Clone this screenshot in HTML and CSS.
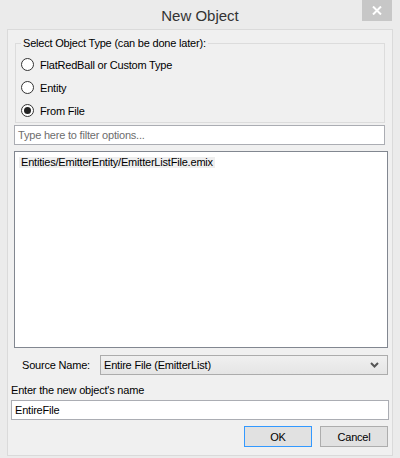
FILE: index.html
```html
<!DOCTYPE html>
<html>
<head>
<meta charset="utf-8">
<link rel="stylesheet" href="styles.css">
</head>
<body>
<div class="window">
  <div class="titlebar">
    <span class="title">New Object</span>
    <div class="close">
      <svg width="10" height="9" viewBox="0 0 10 9"><path d="M1 0.5 L9 8.5 M9 0.5 L1 8.5" stroke="#fff" stroke-width="2" fill="none"/></svg>
    </div>
  </div>
  <div class="client">
    <fieldset class="group">
      <legend class="legend">Select Object Type (can be done later):</legend>
      <div class="radio-row"><span class="radio"></span><span class="lbl">FlatRedBall or Custom Type</span></div>
      <div class="radio-row"><span class="radio"></span><span class="lbl">Entity</span></div>
      <div class="radio-row"><span class="radio checked"></span><span class="lbl">From File</span></div>
    </fieldset>
    <div class="textbox filter"><span class="placeholder">Type here to filter options...</span></div>
    <div class="listbox"><span class="item">Entities/EmitterEntity/EmitterListFile.emix</span></div>
    <div class="source-row">
      <span class="source-label">Source Name:</span>
      <div class="combo">
        <span class="combo-text">Entire File (EmitterList)</span>
        <svg class="chev" width="9" height="6" viewBox="0 0 9 6"><path d="M1 1 L4.5 4.5 L8 1" stroke="#555" stroke-width="2" fill="none"/></svg>
      </div>
    </div>
    <div class="name-label">Enter the new object's name</div>
    <div class="textbox name"><span class="value">EntireFile</span></div>
    <div class="buttons">
      <div class="btn ok">OK</div>
      <div class="btn">Cancel</div>
    </div>
  </div>
</div>
</body>
</html>
```

FILE: styles.css
```css
html, body {
  margin: 0;
  padding: 0;
}
body {
  background: #ebebeb;
  font-family: "Liberation Sans", Arial, sans-serif;
  font-size: 11px;
  letter-spacing: -0.2px;
  color: #000;
}
.window {
  width: 400px;
  height: 458px;
  display: flex;
  flex-direction: column;
  box-sizing: border-box;
}
.titlebar {
  height: 29px;
  position: relative;
  display: flex;
  justify-content: center;
  align-items: center;
  flex-shrink: 0;
}
.title {
  font-size: 15px;
  letter-spacing: 0;
  color: #333;
  padding-top: 1px;
}
.close {
  position: absolute;
  top: 0;
  right: 8px;
  width: 30px;
  height: 21px;
  background: #c7c7c7;
  display: flex;
  align-items: center;
  justify-content: center;
}
.client {
  flex: 1;
  margin: 0 7px 2px 7px;
  background: #f0f0f0;
  border: 1px solid #dadada;
  display: flex;
  flex-direction: column;
  min-height: 0;
}
.group {
  margin: 7px 7px 0 7px;
  padding: 3px 0 0 5px;
  border: 1px solid #dcdcdc;
  min-width: 0;
}
.legend {
  padding: 0 2px;
  margin-left: 0;
  line-height: 13px;
  height: 13px;
}
.radio-row {
  height: 23px;
  display: flex;
  align-items: center;
}
.radio {
  width: 13px;
  height: 13px;
  box-sizing: border-box;
  border: 1px solid #333;
  border-radius: 50%;
  background: #fff;
  display: flex;
  align-items: center;
  justify-content: center;
  margin-right: 6px;
}
.radio.checked::after {
  content: "";
  width: 7px;
  height: 7px;
  border-radius: 50%;
  background: #222;
}
.textbox {
  box-sizing: border-box;
  background: #fff;
  border: 1px solid #abadb3;
  height: 20px;
  display: flex;
  align-items: center;
  padding-left: 3px;
}
.filter {
  margin: 2px 0 0 6px;
  width: 371px;
}
.placeholder {
  color: #6d6d6d;
}
.listbox {
  box-sizing: border-box;
  margin: 6px 0 0 6px;
  width: 374px;
  height: 197px;
  background: #fff;
  border: 1px solid #828790;
  padding: 5px 0 0 4px;
}
.item {
  display: inline-block;
  background: #efefef;
  line-height: 11px;
  height: 11px;
  padding: 0 2px;
  vertical-align: top;
}
.source-row {
  margin: 7px 4px 0 14px;
  display: flex;
  align-items: center;
}
.source-label {
  flex-shrink: 0;
}
.combo {
  margin-left: auto;
  box-sizing: border-box;
  width: 288px;
  height: 20px;
  border: 1px solid #acacac;
  background: linear-gradient(#f0f0f0, #e5e5e5);
  display: flex;
  align-items: center;
  padding: 0 8px 0 3px;
}
.combo-text {
  flex: 1;
}
.name-label {
  margin: 9px 0 0 3px;
  line-height: 13px;
  height: 13px;
}
.name {
  margin: 3px 0 0 3px;
  width: 378px;
}
.buttons {
  margin: 6px 4px 0 0;
  display: flex;
  justify-content: flex-end;
  gap: 8px;
}
.btn {
  box-sizing: border-box;
  width: 68px;
  height: 21px;
  background: #e1e1e1;
  border: 1px solid #adadad;
  display: flex;
  align-items: center;
  justify-content: center;
}
.btn.ok {
  border-color: #3399ff;
}
```
